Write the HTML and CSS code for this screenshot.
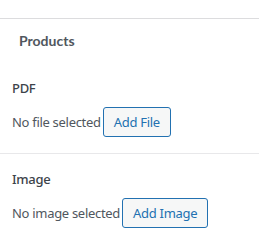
FILE: index.html
```html
<!DOCTYPE html>
<html>
<head>
    <title>Products</title>
    <link rel="stylesheet" href="styles.css">
</head>
<body>
    <div class="panel">
        <h2 class="panel-title">Products</h2>

        <div class="field">
            <label class="field-label">PDF</label>
            <div class="field-row">
                <span class="field-value">No file selected</span>
                <button type="button" class="button">Add File</button>
            </div>
        </div>

        <div class="field field-divided">
            <label class="field-label">Image</label>
            <div class="field-row">
                <span class="field-value">No image selected</span>
                <button type="button" class="button">Add Image</button>
            </div>
        </div>
    </div>
</body>
</html>
```

FILE: styles.css
```css
body {
    margin: 0;
    padding-top: 18px;
    background: #fff;
    font-family: "Noto Sans", "Open Sans", sans-serif;
    font-size: 13px;
    letter-spacing: -0.3px;
    color: #3c434a;
}
.panel {
    border-top: 1px solid #dcdcde;
}
.panel-title {
    margin: 12px 0 12px 19px;
    font-family: Lato, sans-serif;
    font-size: 14px;
    line-height: 20px;
    font-weight: 700;
    letter-spacing: 0;
    color: #50575e;
}
.field {
    padding: 16px 12px;
}
.field-divided {
    border-top: 1px solid #e8e8ea;
}
.field-label {
    display: block;
    margin-bottom: 10px;
    line-height: 18px;
    font-weight: 500;
}
.field-row {
    display: flex;
    align-items: center;
    gap: 2px;
}
.field-value {
    color: #50575e;
}
.button {
    height: 30px;
    padding: 0 10px;
    font-family: inherit;
    font-size: 13px;
    line-height: 28px;
    letter-spacing: inherit;
    color: #2271b1;
    background: #f6f7f7;
    border: 1px solid #2271b1;
    border-radius: 3px;
    cursor: pointer;
}
```
